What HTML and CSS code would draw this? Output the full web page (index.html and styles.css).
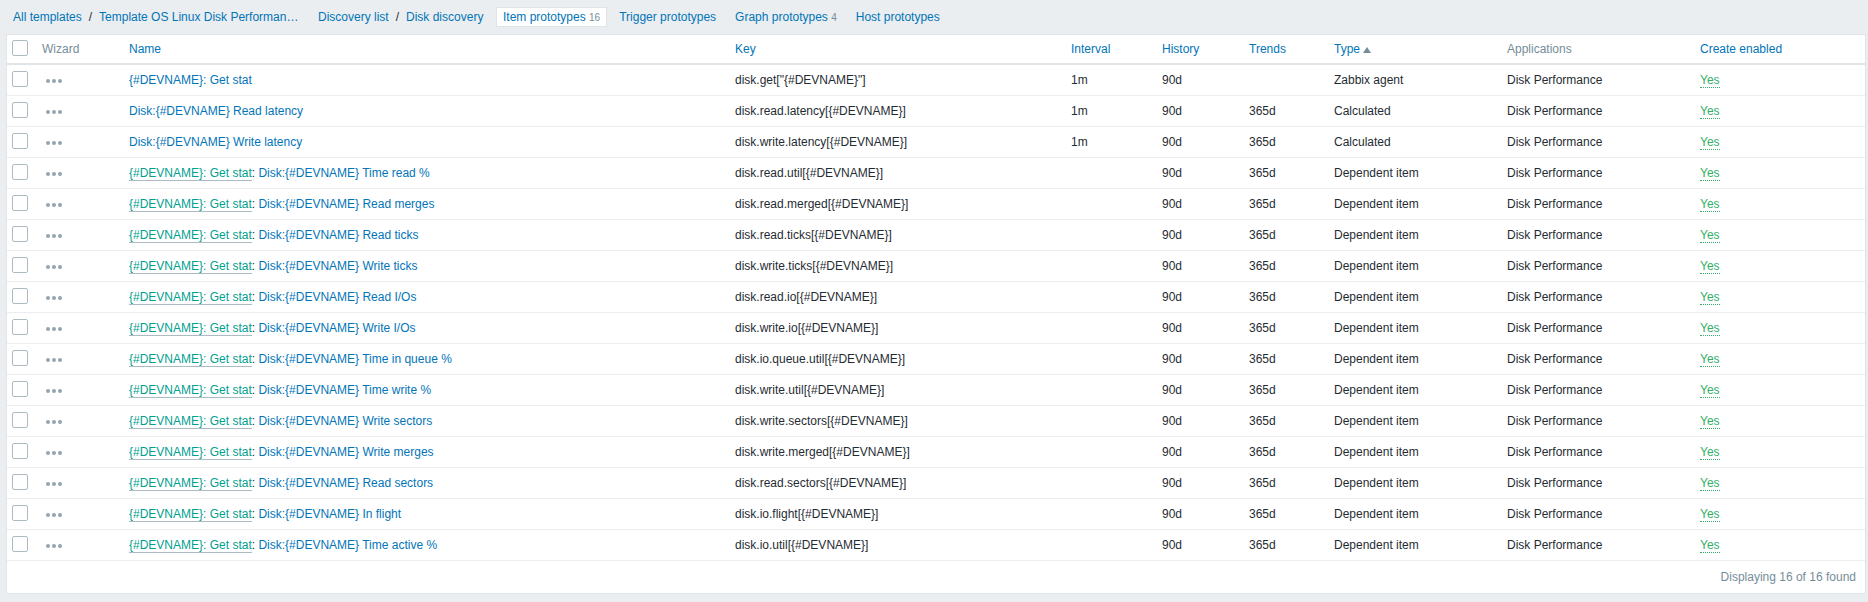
FILE: index.html
```html
<!DOCTYPE html>
<html lang="en">
<head>
    <meta charset="UTF-8">
    <title>Item prototypes</title>
    <link rel="stylesheet" href="styles.css">
</head>
<body>
    <nav class="tabs">
        <div class="crumbs crumbs-template"><a href="#">All templates</a><span class="sep">/</span><a href="#">Template OS Linux Disk Performan…</a></div>
        <div class="crumbs crumbs-discovery"><a href="#">Discovery list</a><span class="sep">/</span><a href="#">Disk discovery</a></div>
        <a class="tab selected" href="#">Item prototypes <sup>16</sup></a>
        <a class="tab" href="#">Trigger prototypes</a>
        <a class="tab" href="#">Graph prototypes <sup>4</sup></a>
        <a class="tab" href="#">Host prototypes</a>
    </nav>
    <main class="container">
        <table>
            <colgroup>
                <col class="c-check"><col class="c-wizard"><col class="c-name"><col class="c-key"><col class="c-interval">
                <col class="c-history"><col class="c-trends"><col class="c-type"><col class="c-apps"><col class="c-enabled">
            </colgroup>
            <thead>
                <tr>
                    <th><span class="check"></span></th>
                    <th class="muted">Wizard</th>
                    <th><a href="#">Name</a></th>
                    <th><a href="#">Key</a></th>
                    <th><a href="#">Interval</a></th>
                    <th><a href="#">History</a></th>
                    <th><a href="#">Trends</a></th>
                    <th><a href="#">Type</a><span class="arrow"></span></th>
                    <th class="muted">Applications</th>
                    <th><a href="#">Create enabled</a></th>
                </tr>
            </thead>
            <tbody>
                <tr><td><span class="check"></span></td><td><span class="dots"><i></i><i></i><i></i></span></td><td><a href="#">{#DEVNAME}: Get stat</a></td><td>disk.get["{#DEVNAME}"]</td><td>1m</td><td>90d</td><td></td><td>Zabbix agent</td><td>Disk Performance</td><td><a class="yes" href="#">Yes</a></td></tr>
                <tr><td><span class="check"></span></td><td><span class="dots"><i></i><i></i><i></i></span></td><td><a href="#">Disk:{#DEVNAME} Read latency</a></td><td>disk.read.latency[{#DEVNAME}]</td><td>1m</td><td>90d</td><td>365d</td><td>Calculated</td><td>Disk Performance</td><td><a class="yes" href="#">Yes</a></td></tr>
                <tr><td><span class="check"></span></td><td><span class="dots"><i></i><i></i><i></i></span></td><td><a href="#">Disk:{#DEVNAME} Write latency</a></td><td>disk.write.latency[{#DEVNAME}]</td><td>1m</td><td>90d</td><td>365d</td><td>Calculated</td><td>Disk Performance</td><td><a class="yes" href="#">Yes</a></td></tr>
                <tr><td><span class="check"></span></td><td><span class="dots"><i></i><i></i><i></i></span></td><td><a class="master" href="#">{#DEVNAME}: Get stat</a>: <a href="#">Disk:{#DEVNAME} Time read %</a></td><td>disk.read.util[{#DEVNAME}]</td><td></td><td>90d</td><td>365d</td><td>Dependent item</td><td>Disk Performance</td><td><a class="yes" href="#">Yes</a></td></tr>
                <tr><td><span class="check"></span></td><td><span class="dots"><i></i><i></i><i></i></span></td><td><a class="master" href="#">{#DEVNAME}: Get stat</a>: <a href="#">Disk:{#DEVNAME} Read merges</a></td><td>disk.read.merged[{#DEVNAME}]</td><td></td><td>90d</td><td>365d</td><td>Dependent item</td><td>Disk Performance</td><td><a class="yes" href="#">Yes</a></td></tr>
                <tr><td><span class="check"></span></td><td><span class="dots"><i></i><i></i><i></i></span></td><td><a class="master" href="#">{#DEVNAME}: Get stat</a>: <a href="#">Disk:{#DEVNAME} Read ticks</a></td><td>disk.read.ticks[{#DEVNAME}]</td><td></td><td>90d</td><td>365d</td><td>Dependent item</td><td>Disk Performance</td><td><a class="yes" href="#">Yes</a></td></tr>
                <tr><td><span class="check"></span></td><td><span class="dots"><i></i><i></i><i></i></span></td><td><a class="master" href="#">{#DEVNAME}: Get stat</a>: <a href="#">Disk:{#DEVNAME} Write ticks</a></td><td>disk.write.ticks[{#DEVNAME}]</td><td></td><td>90d</td><td>365d</td><td>Dependent item</td><td>Disk Performance</td><td><a class="yes" href="#">Yes</a></td></tr>
                <tr><td><span class="check"></span></td><td><span class="dots"><i></i><i></i><i></i></span></td><td><a class="master" href="#">{#DEVNAME}: Get stat</a>: <a href="#">Disk:{#DEVNAME} Read I/Os</a></td><td>disk.read.io[{#DEVNAME}]</td><td></td><td>90d</td><td>365d</td><td>Dependent item</td><td>Disk Performance</td><td><a class="yes" href="#">Yes</a></td></tr>
                <tr><td><span class="check"></span></td><td><span class="dots"><i></i><i></i><i></i></span></td><td><a class="master" href="#">{#DEVNAME}: Get stat</a>: <a href="#">Disk:{#DEVNAME} Write I/Os</a></td><td>disk.write.io[{#DEVNAME}]</td><td></td><td>90d</td><td>365d</td><td>Dependent item</td><td>Disk Performance</td><td><a class="yes" href="#">Yes</a></td></tr>
                <tr><td><span class="check"></span></td><td><span class="dots"><i></i><i></i><i></i></span></td><td><a class="master" href="#">{#DEVNAME}: Get stat</a>: <a href="#">Disk:{#DEVNAME} Time in queue %</a></td><td>disk.io.queue.util[{#DEVNAME}]</td><td></td><td>90d</td><td>365d</td><td>Dependent item</td><td>Disk Performance</td><td><a class="yes" href="#">Yes</a></td></tr>
                <tr><td><span class="check"></span></td><td><span class="dots"><i></i><i></i><i></i></span></td><td><a class="master" href="#">{#DEVNAME}: Get stat</a>: <a href="#">Disk:{#DEVNAME} Time write %</a></td><td>disk.write.util[{#DEVNAME}]</td><td></td><td>90d</td><td>365d</td><td>Dependent item</td><td>Disk Performance</td><td><a class="yes" href="#">Yes</a></td></tr>
                <tr><td><span class="check"></span></td><td><span class="dots"><i></i><i></i><i></i></span></td><td><a class="master" href="#">{#DEVNAME}: Get stat</a>: <a href="#">Disk:{#DEVNAME} Write sectors</a></td><td>disk.write.sectors[{#DEVNAME}]</td><td></td><td>90d</td><td>365d</td><td>Dependent item</td><td>Disk Performance</td><td><a class="yes" href="#">Yes</a></td></tr>
                <tr><td><span class="check"></span></td><td><span class="dots"><i></i><i></i><i></i></span></td><td><a class="master" href="#">{#DEVNAME}: Get stat</a>: <a href="#">Disk:{#DEVNAME} Write merges</a></td><td>disk.write.merged[{#DEVNAME}]</td><td></td><td>90d</td><td>365d</td><td>Dependent item</td><td>Disk Performance</td><td><a class="yes" href="#">Yes</a></td></tr>
                <tr><td><span class="check"></span></td><td><span class="dots"><i></i><i></i><i></i></span></td><td><a class="master" href="#">{#DEVNAME}: Get stat</a>: <a href="#">Disk:{#DEVNAME} Read sectors</a></td><td>disk.read.sectors[{#DEVNAME}]</td><td></td><td>90d</td><td>365d</td><td>Dependent item</td><td>Disk Performance</td><td><a class="yes" href="#">Yes</a></td></tr>
                <tr><td><span class="check"></span></td><td><span class="dots"><i></i><i></i><i></i></span></td><td><a class="master" href="#">{#DEVNAME}: Get stat</a>: <a href="#">Disk:{#DEVNAME} In flight</a></td><td>disk.io.flight[{#DEVNAME}]</td><td></td><td>90d</td><td>365d</td><td>Dependent item</td><td>Disk Performance</td><td><a class="yes" href="#">Yes</a></td></tr>
                <tr><td><span class="check"></span></td><td><span class="dots"><i></i><i></i><i></i></span></td><td><a class="master" href="#">{#DEVNAME}: Get stat</a>: <a href="#">Disk:{#DEVNAME} Time active %</a></td><td>disk.io.util[{#DEVNAME}]</td><td></td><td>90d</td><td>365d</td><td>Dependent item</td><td>Disk Performance</td><td><a class="yes" href="#">Yes</a></td></tr>
            </tbody>
        </table>
        <div class="paging">Displaying 16 of 16 found</div>
    </main>
</body>
</html>
```

FILE: styles.css
```css
* {
    box-sizing: border-box;
}

body {
    margin: 0;
    padding: 7px 2px 8px 6px;
    background-color: #ebeef0;
    color: #1f2c33;
    font-family: "Liberation Sans", Arial, sans-serif;
    font-size: 12px;
    line-height: 14px;
}

a {
    color: #0275b8;
    text-decoration: none;
}

.tabs {
    display: flex;
    align-items: center;
    height: 20px;
    margin-bottom: 7px;
}

.crumbs {
    display: flex;
    padding-left: 7px;
    white-space: nowrap;
}

.crumbs-template {
    width: 305px;
}

.crumbs-discovery {
    width: 185px;
}

.sep {
    margin: 0 7px;
}

.tab {
    display: block;
    height: 20px;
    padding: 2px 6px;
    margin-right: 5px;
    border: 1px solid transparent;
    white-space: nowrap;
}

.tab.selected {
    background-color: #fff;
    border-color: #dfe4e7;
}

.tab sup {
    color: #768d99;
    font-size: 10px;
    line-height: 0;
    vertical-align: baseline;
}

.container {
    background-color: #fff;
    border: 1px solid #dfe4e7;
}

table {
    width: 100%;
    table-layout: fixed;
    border-collapse: separate;
    border-spacing: 0;
}

.c-check { width: 30px; }
.c-wizard { width: 87px; }
.c-name { width: 606px; }
.c-key { width: 336px; }
.c-interval { width: 91px; }
.c-history { width: 87px; }
.c-trends { width: 85px; }
.c-type { width: 173px; }
.c-apps { width: 193px; }

th, td {
    padding: 0 5px;
    text-align: left;
    white-space: nowrap;
    vertical-align: middle;
}

th {
    height: 30px;
    font-weight: normal;
    border-bottom: 2px solid #dfe4e7;
}

td {
    height: 31px;
    border-bottom: 1px solid #ebeef0;
}

.muted {
    color: #768d99;
}

.check {
    display: block;
    width: 16px;
    height: 16px;
    margin-bottom: 2px;
    background-color: #fff;
    border: 1px solid #acbbc2;
    border-radius: 2px;
}

.dots {
    display: flex;
    gap: 2px;
    padding-left: 4px;
    margin-top: 1px;
}

.dots i {
    width: 4px;
    height: 4px;
    border-radius: 50%;
    background-color: #93a5af;
}

.arrow {
    display: inline-block;
    margin-left: 3px;
    border-left: 4px solid transparent;
    border-right: 4px solid transparent;
    border-bottom: 6px solid #768d99;
}

.master {
    color: #00a08f;
    border-bottom: 1px solid #acbbc2;
}

.yes {
    color: #34af67;
    border-bottom: 1px dotted #34af67;
}

.paging {
    height: 32px;
    padding: 9px 9px 0;
    text-align: right;
    color: #768d99;
}
```
